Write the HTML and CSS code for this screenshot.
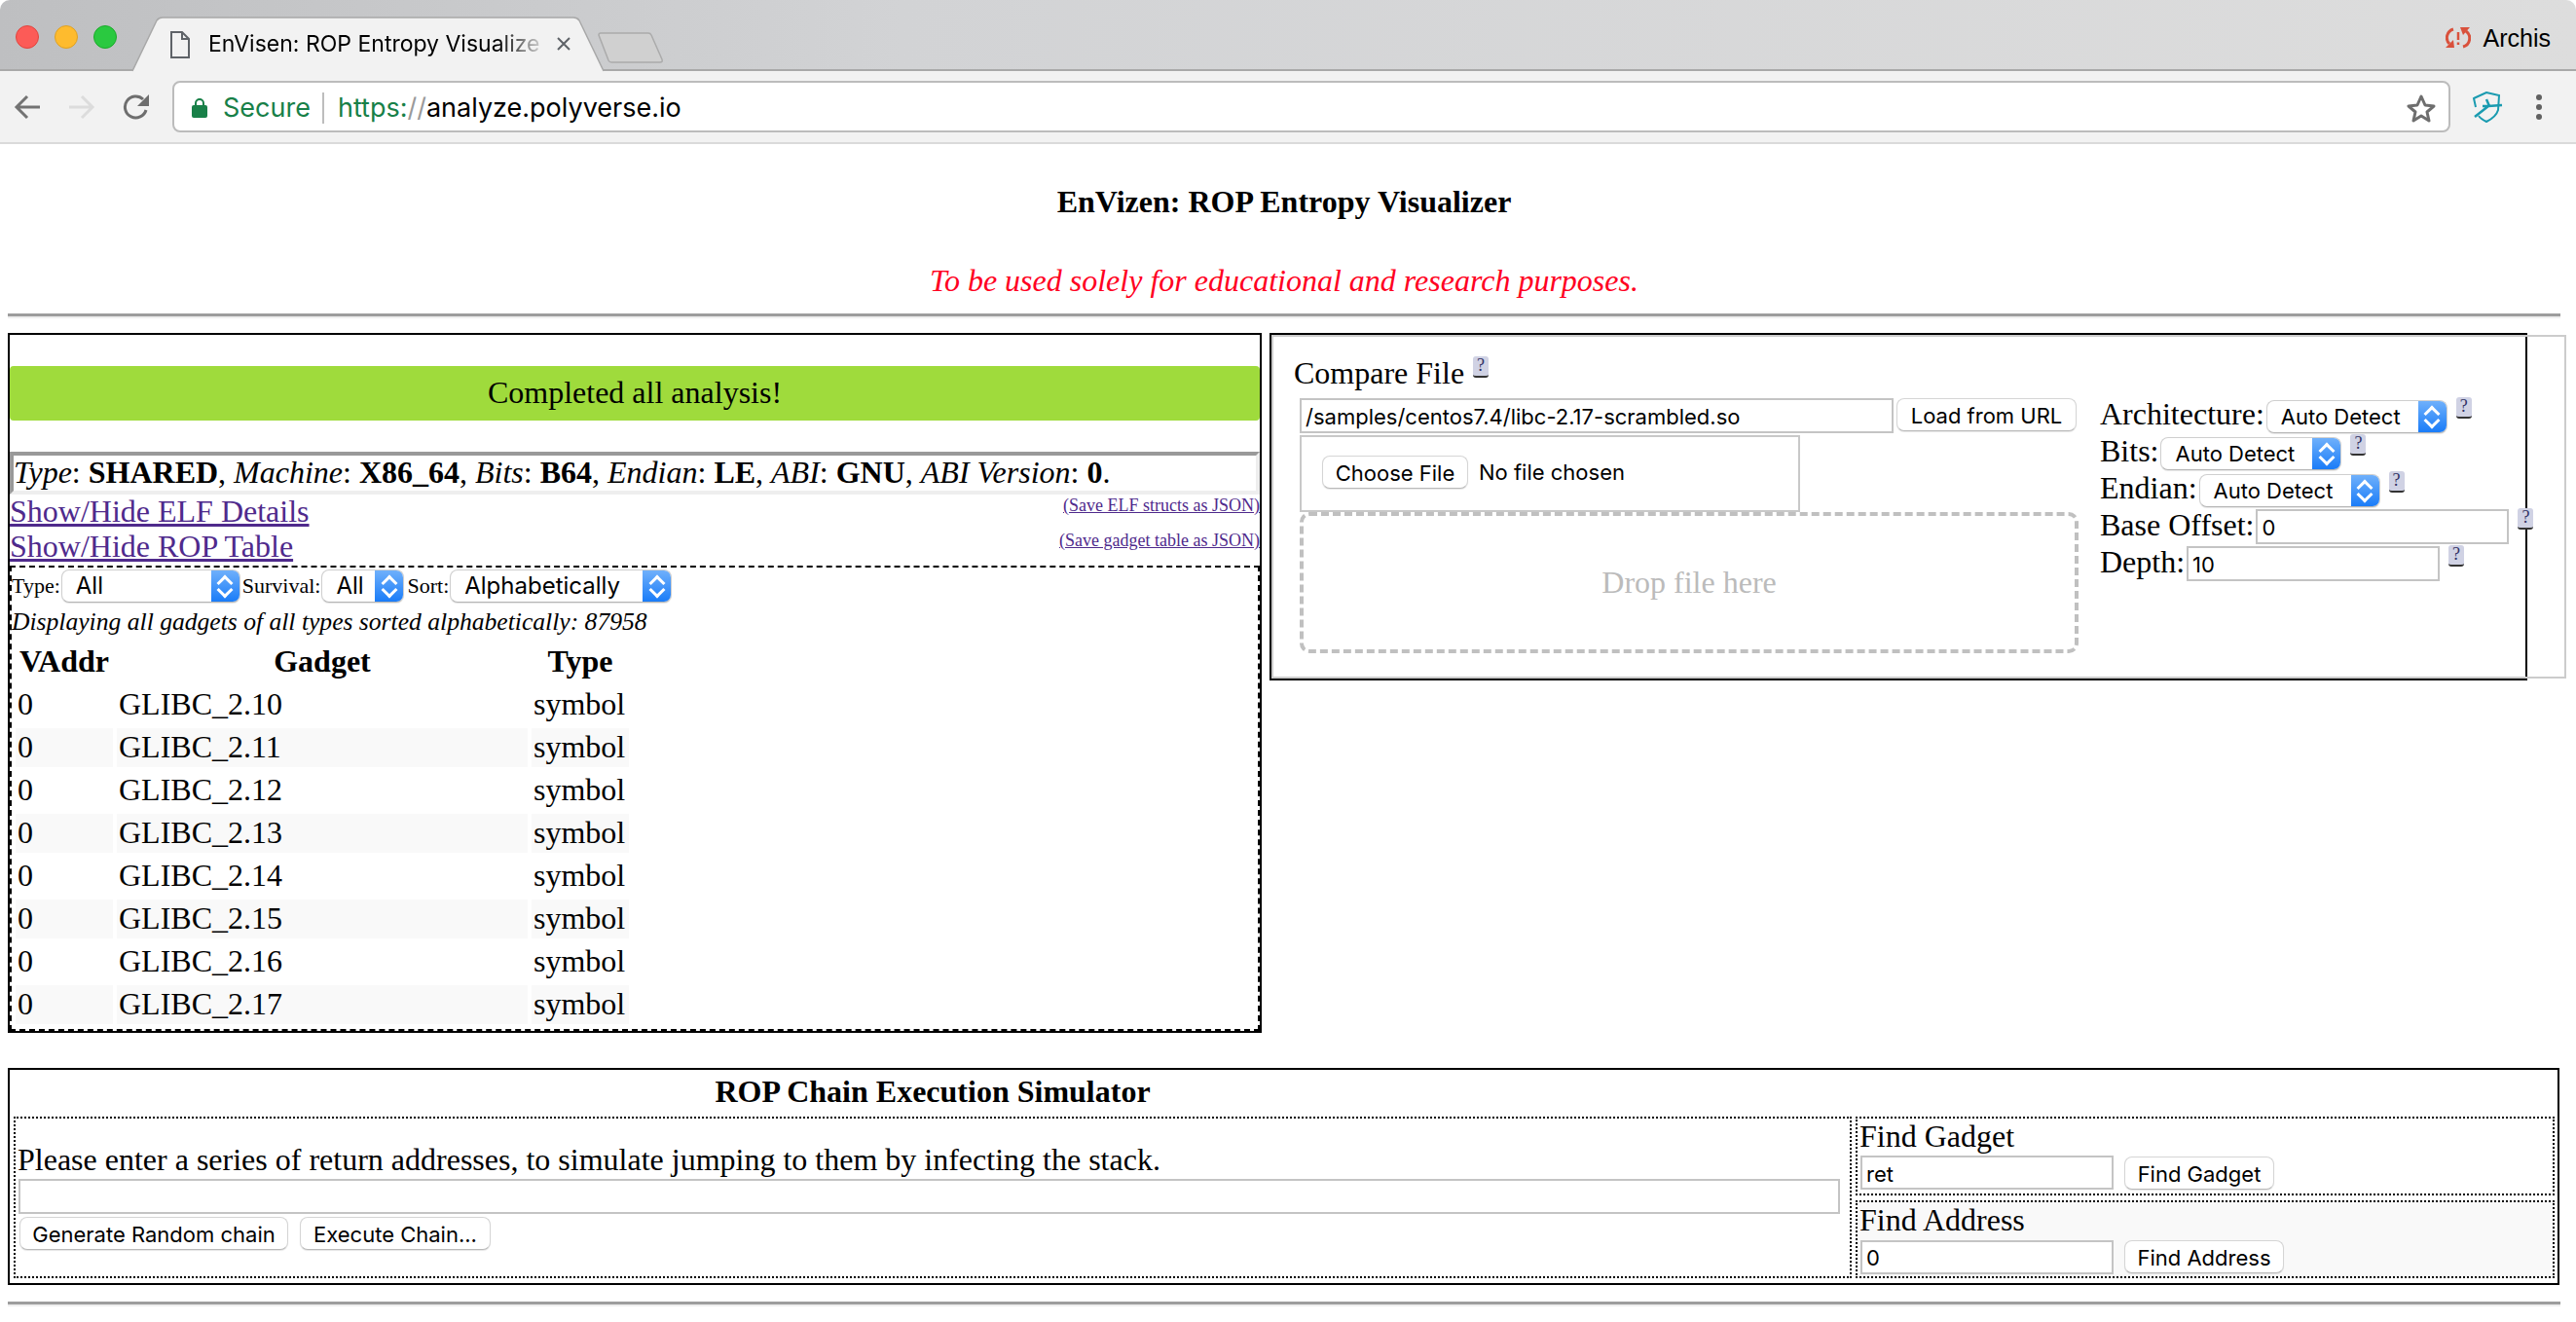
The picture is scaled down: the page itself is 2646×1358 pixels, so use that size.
FILE: index.html
```html
<!DOCTYPE html>
<html lang="en">
<head>
    <meta charset="UTF-8">
    <title>EnVisen: ROP Entropy Visualizer</title>
    <link rel="stylesheet" href="styles.css">
</head>
<body>
    <div class="tabstrip">
        <span class="light light-red"></span>
        <span class="light light-yellow"></span>
        <span class="light light-green"></span>
        <div class="tab">
            <svg class="tab-shape" width="484" height="57" viewBox="0 0 484 57">
                <path d="M0 56 L25 4 Q27 1 31 1 L453 1 Q457 1 459 4 L484 56" fill="#f2f2f2" stroke="#a8a8a8" stroke-width="1.5"/>
            </svg>
            <svg class="file-icon" width="20" height="28" viewBox="0 0 20 28">
                <path d="M1 1 H12 L19 8 V27 H1 Z M12 1 V8 H19" fill="none" stroke="#5f6368" stroke-width="2"/>
            </svg>
            <span class="tab-title">EnVisen: ROP Entropy Visualize</span>
            <svg class="tab-close" width="16" height="16" viewBox="0 0 16 16">
                <path d="M2 2 L14 14 M14 2 L2 14" stroke="#5f6368" stroke-width="2"/>
            </svg>
        </div>
        <svg class="newtab" width="68" height="32" viewBox="0 0 68 32">
            <path d="M1 3 Q1 1 3 1 L52 1 Q54 1 55 3 L66 28 Q67 31 64 31 L14 31 Q12 31 11 29 Z" fill="#d0d0d0" stroke="#ababab" stroke-width="1.5"/>
        </svg>
        <div class="archis">
            <svg width="26" height="24" viewBox="0 0 26 24">
                <path d="M8 3 A9 9 0 0 0 4 18" fill="none" stroke="#d9513c" stroke-width="3"/>
                <path d="M0 22 L9 22 L8 14 Z" fill="#d9513c"/>
                <path d="M18 21 A9 9 0 0 0 21 5" fill="none" stroke="#d9513c" stroke-width="3"/>
                <path d="M25 1 L15 1 L18 9 Z" fill="#d9513c"/>
                <path d="M13 6 V14 M13 16.500 V19" stroke="#d9513c" stroke-width="2.500"/>
            </svg>
            <span>Archis</span>
        </div>
    </div>

    <div class="toolbar">
        <svg class="nav-icon" width="28" height="28" viewBox="0 0 28 28">
            <path d="M27 14 H3 M14 3 L3 14 L14 25" fill="none" stroke="#737373" stroke-width="3"/>
        </svg>
        <svg class="nav-icon" width="28" height="28" viewBox="0 0 28 28">
            <path d="M1 14 H25 M14 3 L25 14 L14 25" fill="none" stroke="#dcdcdc" stroke-width="3"/>
        </svg>
        <svg class="nav-icon" width="28" height="28" viewBox="0 0 28 28">
            <path d="M24 17 A11 11 0 1 1 21 6" fill="none" stroke="#6e6e6e" stroke-width="3"/>
            <path d="M27 1 V13 H15 Z" fill="#6e6e6e"/>
        </svg>
        <div class="omnibox">
            <svg width="16" height="21" viewBox="0 0 16 21">
                <path d="M4 9 V6 A4 4 0 0 1 12 6 V9" fill="none" stroke="#188048" stroke-width="2"/>
                <rect x="0" y="8" width="16" height="13" rx="2" fill="#188048"/>
            </svg>
            <span class="secure">Secure</span>
            <span class="omni-divider"></span>
            <span class="url"><span class="url-scheme">https</span><span class="url-scheme">:</span><span class="url-slash">//</span>analyze.polyverse.io</span>
            <svg class="star" width="32" height="30" viewBox="0 0 32 30">
                <path d="M16 3 L20 12 L29 13 L22 19 L24 28 L16 23 L8 28 L10 19 L3 13 L12 12 Z" fill="none" stroke="#6e6e6e" stroke-width="3" stroke-linejoin="round"/>
            </svg>
        </div>
        <svg class="shield" width="32" height="32" viewBox="0 0 32 32">
            <path d="M4 16 L2 7 L15 1 L28 4 L27 19 Q25 26 15 31 Q9 28 7 25" fill="none" stroke="#1a9bb0" stroke-width="2"/>
            <path d="M3 26 L17 15 L31 14 M15 8 L18 15 L11 15" fill="none" stroke="#1a9bb0" stroke-width="2.500"/>
        </svg>
        <div class="menu-dots"><span></span><span></span><span></span></div>
    </div>

    <div class="page">
        <h3 class="page-title">EnVizen: ROP Entropy Visualizer</h3>
        <p class="disclaimer">To be used solely for educational and research purposes.</p>
        <hr class="rule">

        <div class="panels">
            <div class="panel-left">
                <div class="status">Completed all analysis!</div>
                <div class="elf-summary">
                    <i>Type</i>: <b>SHARED</b>, <i>Machine</i>: <b>X86_64</b>, <i>Bits</i>: <b>B64</b>, <i>Endian</i>: <b>LE</b>, <i>ABI</i>: <b>GNU</b>, <i>ABI Version</i>: <b>0</b>.
                </div>
                <div class="link-row">
                    <a href="#">Show/Hide ELF Details</a>
                    <a href="#" class="save-link">(Save ELF structs as JSON)</a>
                </div>
                <div class="link-row">
                    <a href="#">Show/Hide ROP Table</a>
                    <a href="#" class="save-link">(Save gadget table as JSON)</a>
                </div>
                <div class="gadgets">
                    <div class="filters">
                        <span>Type:</span>
                        <span class="select select-type"><span class="select-text">All</span><span class="select-arrows"></span></span>
                        <span>Survival:</span>
                        <span class="select select-survival"><span class="select-text">All</span><span class="select-arrows"></span></span>
                        <span>Sort:</span>
                        <span class="select select-sort"><span class="select-text">Alphabetically</span><span class="select-arrows"></span></span>
                    </div>
                    <div class="gadget-count">Displaying all gadgets of all types sorted alphabetically: 87958</div>
                    <table class="gadget-table">
                        <thead>
                            <tr><th class="col-addr">VAddr</th><th class="col-gadget">Gadget</th><th class="col-type">Type</th></tr>
                        </thead>
                        <tbody>
                            <tr><td>0</td><td>GLIBC_2.10</td><td>symbol</td></tr>
                            <tr><td>0</td><td>GLIBC_2.11</td><td>symbol</td></tr>
                            <tr><td>0</td><td>GLIBC_2.12</td><td>symbol</td></tr>
                            <tr><td>0</td><td>GLIBC_2.13</td><td>symbol</td></tr>
                            <tr><td>0</td><td>GLIBC_2.14</td><td>symbol</td></tr>
                            <tr><td>0</td><td>GLIBC_2.15</td><td>symbol</td></tr>
                            <tr><td>0</td><td>GLIBC_2.16</td><td>symbol</td></tr>
                            <tr><td>0</td><td>GLIBC_2.17</td><td>symbol</td></tr>
                        </tbody>
                    </table>
                </div>
            </div>

            <div class="panel-right">
                <div class="compare">
                    <div class="compare-main">
                        <div class="compare-heading">Compare File <a href="#" class="help">?</a></div>
                        <div class="url-row">
                            <input class="field field-url" type="text" value="/samples/centos7.4/libc-2.17-scrambled.so">
                            <button class="btn btn-load">Load from URL</button>
                        </div>
                        <div class="file-box">
                            <button class="btn btn-choose">Choose File</button>
                            <span class="file-name">No file chosen</span>
                        </div>
                        <div class="dropzone">Drop file here</div>
                    </div>
                    <div class="options">
                        <div class="option-row">
                            <span>Architecture:</span>
                            <span class="select select-auto"><span class="select-text">Auto Detect</span><span class="select-arrows"></span></span>
                            <a href="#" class="help">?</a>
                        </div>
                        <div class="option-row">
                            <span>Bits:</span>
                            <span class="select select-auto"><span class="select-text">Auto Detect</span><span class="select-arrows"></span></span>
                            <a href="#" class="help">?</a>
                        </div>
                        <div class="option-row">
                            <span>Endian:</span>
                            <span class="select select-auto"><span class="select-text">Auto Detect</span><span class="select-arrows"></span></span>
                            <a href="#" class="help">?</a>
                        </div>
                        <div class="option-row">
                            <span>Base Offset:</span>
                            <input class="field field-option" type="text" value="0">
                            <a href="#" class="help">?</a>
                        </div>
                        <div class="option-row">
                            <span>Depth:</span>
                            <input class="field field-option" type="text" value="10">
                            <a href="#" class="help">?</a>
                        </div>
                    </div>
                </div>
            </div>
        </div>

        <div class="simulator">
            <div class="sim-title">ROP Chain Execution Simulator</div>
            <div class="sim-spacer"></div>
            <div class="sim-chain">
                <div class="chain-intro">Please enter a series of return addresses, to simulate jumping to them by infecting the stack.</div>
                <input class="field field-chain" type="text">
                <div class="chain-buttons">
                    <button class="btn btn-generate">Generate Random chain</button>
                    <button class="btn btn-execute">Execute Chain...</button>
                </div>
            </div>
            <div class="sim-finders">
                <div class="finder">
                    <div>Find Gadget</div>
                    <div class="finder-row">
                        <input class="field field-find" type="text" value="ret">
                        <button class="btn btn-gadget">Find Gadget</button>
                    </div>
                </div>
                <div class="finder finder-alt">
                    <div>Find Address</div>
                    <div class="finder-row">
                        <input class="field field-find" type="text" value="0">
                        <button class="btn btn-address">Find Address</button>
                    </div>
                </div>
            </div>
        </div>

        <hr class="rule rule-bottom">
    </div>
</body>
</html>
```

FILE: styles.css
```css
* {
    box-sizing: border-box;
}
html, body {
    height: 100%;
}
body {
    margin: 0;
    overflow: hidden;
    background: #fff;
    color: #000;
    font-family: "Liberation Serif", serif;
    font-size: 32px;
    line-height: 36px;
}
a {
    color: #4f2a8c;
}

/* browser window */
.tabstrip {
    display: flex;
    align-items: flex-start;
    height: 73px;
    padding-left: 16px;
    background: linear-gradient(90deg, #bebfc1 0, #d2d3d5 35%, #dddddd 100%);
    border-bottom: 2px solid #a9a9a9;
    border-radius: 10px 10px 0 0;
}
.light {
    flex: none;
    width: 24px;
    height: 24px;
    margin: 26px 16px 0 0;
    border-radius: 50%;
}
.light-red {
    background: #fc5b57;
    border: 1px solid #e0443e;
}
.light-yellow {
    background: #febb2e;
    border: 1px solid #dea123;
}
.light-green {
    background: #2ac940;
    border: 1px solid #1aab29;
}
.tab {
    position: relative;
    flex: none;
    display: flex;
    align-items: center;
    width: 484px;
    height: 56px;
    margin-top: 17px;
    padding-left: 39px;
    font-family: "Inter", sans-serif;
    font-size: 23px;
}
.tab-shape {
    position: absolute;
    left: 0;
    top: 0;
}
.file-icon {
    position: relative;
    flex: none;
    margin-top: 2px;
}
.tab-title {
    position: relative;
    width: 349px;
    margin-left: 19px;
    white-space: nowrap;
    -webkit-mask-image: linear-gradient(90deg, #000 85%, transparent 100%);
    mask-image: linear-gradient(90deg, #000 85%, transparent 100%);
}
.tab-close {
    position: relative;
    flex: none;
    margin-left: 8px;
}
.newtab {
    flex: none;
    margin: 33px 0 0 -6px;
}
.archis {
    display: flex;
    align-items: center;
    gap: 13px;
    margin: 26px 26px 0 auto;
    font-family: "Liberation Sans", sans-serif;
    font-size: 25px;
    line-height: 26px;
}
.toolbar {
    display: flex;
    align-items: center;
    height: 75px;
    padding-left: 14px;
    background: #f2f2f2;
    border-bottom: 2px solid #dadada;
}
.nav-icon {
    flex: none;
    margin-right: 28px;
}
.omnibox {
    flex: none;
    display: flex;
    align-items: center;
    width: 2340px;
    height: 53px;
    margin-left: -5px;
    padding: 2px 0 0 18px;
    background: #fff;
    border: 2px solid #bcbcbc;
    border-radius: 8px;
    font-family: "Inter", sans-serif;
    font-size: 27px;
}
.secure {
    margin-left: 16px;
    color: #188048;
}
.omni-divider {
    width: 2px;
    height: 32px;
    margin: 0 14px 0 12px;
    background: #bdbdbd;
}
.url {
    color: #000;
}
.url-scheme {
    color: #188048;
}
.url-slash {
    color: #9a9a9a;
}
.star {
    margin-left: auto;
    margin-right: 12px;
}
.shield {
    flex: none;
    margin-left: 22px;
}
.menu-dots {
    display: flex;
    flex-direction: column;
    gap: 4px;
    margin-left: 34px;
}
.menu-dots span {
    width: 6px;
    height: 6px;
    border-radius: 50%;
    background: #616161;
}

/* page */
.page {
    padding: 0 16px 0 8px;
}
.page-title {
    margin: 41px 0 0;
    text-align: center;
    font-size: 32px;
}
.disclaimer {
    margin: 45px 0 0;
    text-align: center;
    font-style: italic;
    color: #ff0022;
}
.rule {
    height: 5px;
    margin: 16px 0 15px;
    border: 0;
    border-top: 3px solid #9d9d9d;
    border-bottom: 2px solid #eeeeee;
}
.panels {
    display: flex;
    align-items: flex-start;
    gap: 8px;
}
.panel-left {
    flex: none;
    width: 1288px;
    height: 719px;
    padding-top: 32px;
    border: 2px solid #000;
}
.status {
    height: 56px;
    background: #9fdb3c;
    border-radius: 4px;
    text-align: center;
    line-height: 54px;
}
.elf-summary {
    height: 44px;
    margin-top: 32px;
    border-style: solid;
    border-width: 4px;
    border-color: #999 #eee #eee #999;
    line-height: 34px;
    white-space: nowrap;
}
.link-row {
    display: flex;
    justify-content: space-between;
    height: 36px;
    line-height: 34px;
}
.save-link {
    font-size: 18px;
    line-height: 22px;
}
.gadgets {
    height: 478px;
    margin-top: 1px;
    border: 2px dashed #000;
}
.filters {
    display: flex;
    align-items: center;
    height: 34px;
    margin-top: 2px;
    font-size: 22px;
    gap: 1px;
}
.select {
    flex: none;
    display: flex;
    height: 34px;
    background: #fff;
    border-radius: 8px;
    border: 1px solid #cfcfcf;
    border-bottom-color: #b5b5b5;
    box-shadow: 0 1px 1px rgba(0, 0, 0, 0.1);
    font-family: "Inter", sans-serif;
    font-size: 24px;
    line-height: 32px;
    overflow: hidden;
}
.select-text {
    flex: 1;
    padding-left: 14px;
    white-space: nowrap;
}
.select-arrows {
    flex: none;
    display: flex;
    flex-direction: column;
    align-items: center;
    justify-content: center;
    width: 29px;
    background: linear-gradient(#6fb0fb, #1a7cf8);
}
.select-arrows::before,
.select-arrows::after {
    content: "";
    width: 9px;
    height: 9px;
    border: solid #fff;
    border-width: 3px 0 0 3px;
}
.select-arrows::before {
    transform: rotate(45deg);
}
.select-arrows::after {
    margin-top: -5px;
    transform: rotate(225deg);
}
.select-type {
    width: 184px;
    margin-right: 1px;
}
.select-survival {
    width: 85px;
    margin-right: 2px;
}
.select-sort {
    width: 228px;
}
.select-auto {
    width: 186px;
    margin-top: 3px;
    font-size: 22px;
}
.gadget-count {
    height: 34px;
    margin-top: 3px;
    font-size: 25.6px;
    font-style: italic;
    line-height: 34px;
}
.gadget-table {
    border-spacing: 4px;
    table-layout: fixed;
    width: 638px;
}
.gadget-table th,
.gadget-table td {
    height: 40px;
    padding: 1px 2px 3px;
    white-space: nowrap;
}
.gadget-table tbody tr:nth-child(even) td {
    background: #f9f9f9;
}
.col-addr,
.col-type {
    width: 100px;
}
.col-gadget {
    width: 422px;
}

/* compare file */
.panel-right {
    flex: none;
    width: 1292px;
    height: 357px;
    border: 2px solid #000;
}
.compare {
    display: flex;
    align-items: flex-start;
    width: 1330px;
    height: 353px;
    padding-left: 27px;
    border: 2px solid #ccc;
}
.compare-main {
    flex: none;
    width: 800px;
    padding-top: 20px;
}
.compare-heading {
    display: flex;
    align-items: flex-start;
    gap: 9px;
    height: 36px;
    margin-left: -6px;
    line-height: 34px;
}
.help {
    flex: none;
    width: 16px;
    height: 22px;
    background: #d0d2e4;
    border-bottom: 2px solid #333;
    border-radius: 3px;
    color: #336;
    font-size: 18px;
    line-height: 18px;
    text-align: center;
    text-decoration: none;
}
.url-row {
    display: flex;
    gap: 3px;
    margin-top: 7px;
}
.field {
    height: 36px;
    padding: 2px 4px 0;
    background: #fff;
    border: 2px solid #c4c4c4;
    font-family: "Inter", sans-serif;
    font-size: 22px;
    color: #000;
    outline: none;
}
.field-url {
    width: 610px;
}
.btn {
    flex: none;
    height: 34px;
    padding: 2px 0 0;
    background: #fff;
    border: 1px solid #d5d5d5;
    border-bottom-color: #b9b9b9;
    border-radius: 8px;
    box-shadow: 0 1px 1px rgba(0, 0, 0, 0.1);
    font-family: "Inter", sans-serif;
    font-size: 22px;
    color: #000;
}
.btn-load {
    width: 185px;
}
.file-box {
    display: flex;
    align-items: center;
    width: 514px;
    height: 79px;
    margin-top: 2px;
    padding: 0 0 3px 21px;
    border: 2px solid #c8c8c8;
    font-family: "Inter", sans-serif;
    font-size: 22px;
}
.btn-choose {
    width: 150px;
}
.file-name {
    margin-left: 11px;
}
.dropzone {
    display: flex;
    align-items: center;
    justify-content: center;
    height: 145px;
    padding-bottom: 2px;
    border: 4px dashed #c0c0c0;
    border-radius: 10px;
    color: #bbb;
}
.options {
    flex: none;
    margin: 62px 0 0 22px;
}
.option-row {
    display: flex;
    align-items: flex-start;
    gap: 2px;
    height: 38px;
    line-height: 34px;
    white-space: nowrap;
}
.option-row .help {
    margin-left: 7px;
    line-height: 18px;
}
.field-option {
    width: 260px;
    margin-top: 1px;
}

/* simulator */
.simulator {
    display: grid;
    grid-template-columns: 1888px 718px;
    grid-template-rows: 43px 166px;
    column-gap: 4px;
    width: 2621px;
    height: 223px;
    margin-top: 36px;
    padding: 5px 0 0 4px;
    border: 2px solid #000;
}
.sim-title {
    text-align: center;
    font-weight: bold;
    line-height: 34px;
}
.sim-chain {
    padding: 25px 5px 0 2px;
    border: 2px dotted #000;
}
.chain-intro {
    height: 36px;
    line-height: 34px;
}
.field-chain {
    display: block;
    width: 1871px;
    margin: 1px 0 0 1px;
}
.chain-buttons {
    display: flex;
    gap: 12px;
    margin: 3px 0 0 2px;
}
.btn-generate {
    width: 276px;
}
.btn-execute {
    width: 196px;
}
.sim-finders {
    display: flex;
    flex-direction: column;
    gap: 5px;
}
.finder {
    flex: 1;
    padding-left: 2px;
    border: 2px dotted #000;
}
.finder-alt {
    background: #f9f9f9;
}
.finder-row {
    display: flex;
    align-items: center;
    gap: 11px;
    margin-top: 2px;
    padding-left: 1px;
}
.finder-alt .finder-row {
    margin-top: 3px;
}
.field-find {
    width: 260px;
    height: 35px;
}
.btn-gadget {
    width: 154px;
}
.btn-address {
    width: 164px;
}
.rule-bottom {
    margin: 17px 0 0;
}
```
